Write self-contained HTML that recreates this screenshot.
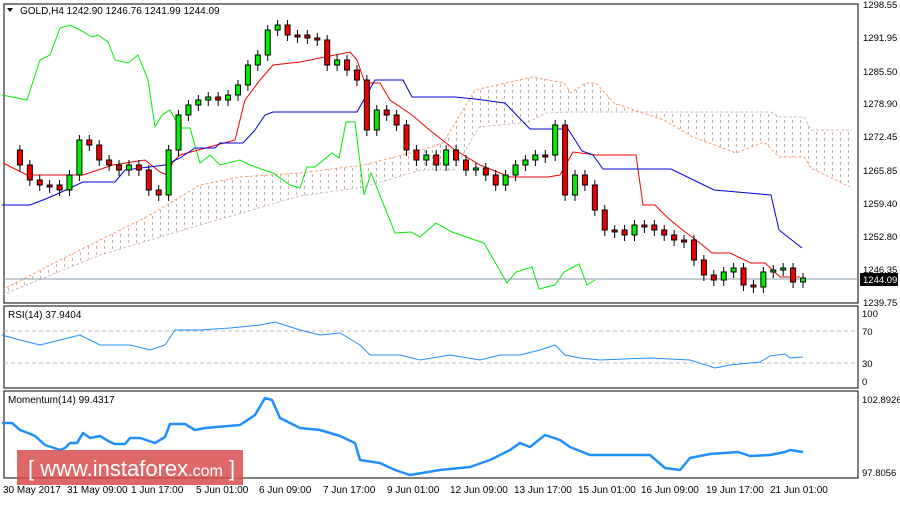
<!DOCTYPE html>
<html><head><meta charset="utf-8"><style>
body{margin:0;background:#fff;width:900px;height:500px;overflow:hidden;font-family:"Liberation Sans",sans-serif}
svg text{font-family:"Liberation Sans",sans-serif;font-size:10px;fill:#000}
svg .ax text{font-size:9.5px}
</style></head><body>
<svg id="s" width="900" height="500" xmlns="http://www.w3.org/2000/svg">
<defs>
<pattern id="h" width="8" height="6" patternUnits="userSpaceOnUse"><rect x="0" y="0" width="1" height="3" fill="#c8b0a8"/></pattern>
<clipPath id="cp"><rect x="4" y="4" width="854" height="299"/></clipPath>
</defs>
<rect x="4" y="4" width="854" height="299" fill="none" stroke="#000"/>
<rect x="4" y="306" width="854" height="82" fill="none" stroke="#000"/>
<rect x="4" y="391" width="854" height="87" fill="none" stroke="#000"/>
<g clip-path="url(#cp)">
<polygon fill="url(#h)" points="2,290 50,265 100,240 150,215 200,185 240,177 300,173 364,165 421,150 443,143 475,90 532,77 564,83 571,93 586,83 596,83 614,103 643,113 664,120 693,137 736,153 764,142 779,157 804,157 811,168 850,187 852,130 811,130 804,117 779,117 771,112 571,112 546,113 529,122 479,127 454,170 421,170 364,187 300,196 200,225 100,255 2,295"/>
<polyline fill="none" stroke="#f4a070" stroke-dasharray="3,2" points="2,290 50,265 100,240 150,215 200,185 240,177 300,173 364,165 421,150 443,143 475,90 532,77 564,83 571,93 586,83 596,83 614,103 643,113 664,120 693,137 736,153 764,142 779,157 804,157 811,168 850,187"/>
<polyline fill="none" stroke="#d0b8c8" stroke-dasharray="3,2" points="2,295 100,255 200,225 300,196 364,187 421,170 454,170 479,127 529,122 546,113 571,112 771,112 779,117 804,117 811,130 852,130"/>
</g>
<polyline fill="none" stroke="#00ee00" points="2,95 27,100 40,60 50,55 60,28 70,25 80,30 92,37 98,35 108,42 115,60 128,63 138,55 148,80 155,127 162,115 170,110 180,128 190,128 200,163 210,155 220,165 240,160 250,165 273,173 290,185 300,188 307,167 315,167 332,153 339,158 346,122 355,122 364,195 371,173 395,233 411,232 420,237 436,223 452,232 484,243 507,283 516,272 532,267 539,289 555,285 564,272 579,264 587,285 595,280"/>
<polyline fill="none" stroke="#ee0000" points="3,163 27,175 83,175 113,165 145,160 160,172 167,175 173,162 180,155 235,140 245,100 260,80 273,65 300,62 350,52 357,60 365,83 380,83 390,100 412,115 432,132 455,150 480,165 510,177 548,177 560,175 573,152 596,155 636,155 643,205 655,205 668,218 680,228 700,243 712,253 730,253 751,263 765,263 780,277 800,277"/>
<polyline fill="none" stroke="#0000dd" points="2,205 30,205 43,200 55,195 83,182 115,182 125,170 165,165 180,158 195,148 215,148 220,143 243,143 255,130 265,115 273,112 357,112 375,80 403,80 412,97 455,97 475,99 505,103 530,129 568,129 582,151 593,155 603,169 671,169 714,190 771,195 779,230 802,248"/>
<line x1="4" y1="279" x2="858" y2="279" stroke="#8899aa"/>
<g id="c"></g>
<text x="20" y="14">GOLD,H4  1242.90 1246.76 1241.99 1244.09</text>
<polygon points="7,8 13,8 10,12" fill="#000"/>
<g class="ax">
<text x="863" y="8">1298.55</text><text x="863" y="41">1291.95</text><text x="863" y="75">1285.50</text><text x="863" y="107">1278.90</text><text x="863" y="140">1272.45</text><text x="863" y="174">1265.85</text><text x="863" y="207">1259.40</text><text x="863" y="240">1252.80</text><text x="863" y="273">1246.35</text><text x="863" y="306">1239.75</text>
<rect x="860" y="273" width="38" height="13" fill="#000"/><text x="863" y="283" style="fill:#fff">1244.09</text>
<text x="862" y="317">100</text><text x="862" y="335">70</text><text x="862" y="367">30</text><text x="862" y="385">0</text>
<text x="862" y="403">102.8926</text><text x="862" y="476">97.8056</text>
</g>
<line x1="4" y1="331" x2="858" y2="331" stroke="#bbb" stroke-dasharray="4,3"/>
<line x1="4" y1="363" x2="858" y2="363" stroke="#bbb" stroke-dasharray="4,3"/>
<polyline fill="none" stroke="#1e90ff" points="2,335 20,340 40,345 60,340 80,335 100,345 130,345 150,350 165,345 175,330 200,330 230,328 260,325 275,322 300,330 320,335 340,333 360,345 370,355 400,355 420,360 450,355 480,360 500,355 520,355 540,350 555,345 565,355 580,358 600,360 650,358 690,360 715,368 730,365 760,362 770,356 785,354 790,358 803,357"/>
<text x="8" y="318">RSI(14) 37.9404</text>
<polyline fill="none" stroke="#1e90ff" stroke-width="2.5" stroke-linejoin="round" points="2,423 12,423 20,430 28,433 35,436 45,445 60,450 65,448 70,443 77,443 83,433 90,438 100,436 110,442 115,444 125,444 130,438 140,438 155,443 165,437 170,424 185,424 195,430 205,428 240,425 255,415 265,398 272,400 280,418 300,428 320,430 340,436 355,443 360,460 380,463 395,470 410,475 440,470 470,467 490,460 510,450 520,443 530,447 545,435 560,440 570,447 590,455 620,455 650,455 665,468 680,470 690,458 710,454 738,452 750,456 770,455 785,452 790,450 803,452"/>
<text x="8" y="403">Momentum(14) 99.4317</text>
<rect x="17" y="450" width="226" height="35" fill="#d84c4c" fill-opacity="0.85"/>
<text x="28" y="476" style="fill:#fff;font-size:22px">[ www.instaforex<tspan style="font-size:16px">.com</tspan> ]</text>
<g>
<text x="3" y="493">30 May 2017</text><text x="67" y="493">31 May 09:00</text><text x="131" y="493">1 Jun 17:00</text><text x="196" y="493">5 Jun 01:00</text><text x="259" y="493">6 Jun 09:00</text><text x="323" y="493">7 Jun 17:00</text><text x="387" y="493">9 Jun 01:00</text><text x="450" y="493">12 Jun 09:00</text><text x="514" y="493">13 Jun 17:00</text><text x="578" y="493">15 Jun 01:00</text><text x="641" y="493">16 Jun 09:00</text><text x="706" y="493">19 Jun 17:00</text><text x="770" y="493">21 Jun 01:00</text>
</g>
</svg>
<script>
var ys=[150,165,180,185,185,190,175,140,145,160,165,170,165,170,190,195,150,115,105,100,97,100,95,85,65,55,30,25,35,35,38,40,65,60,70,80,130,110,115,125,150,160,155,165,150,160,170,168,175,185,175,165,160,155,155,125,195,175,185,210,230,230,235,225,225,230,235,240,240,260,275,280,272,268,285,287,272,270,268,282,278];
var g=document.getElementById('c'),h='',n=ys.length;
for(var i=1;i<n;i++){var x=10+i*(793/(n-1)),o=ys[i-1],c=ys[i];var t=Math.min(o,c),b=Math.max(o,c);if(b-t<2){b=t+2;}
var col=c<o?'#00ee00':'#ee0000';
h+='<line x1="'+x+'" y1="'+(t-5)+'" x2="'+x+'" y2="'+(b+6)+'" stroke="#000"/>';
h+='<rect x="'+(x-2.5)+'" y="'+t+'" width="5" height="'+(b-t)+'" fill="'+col+'" stroke="#000"/>';}
g.innerHTML=h;
</script>
</body></html>
